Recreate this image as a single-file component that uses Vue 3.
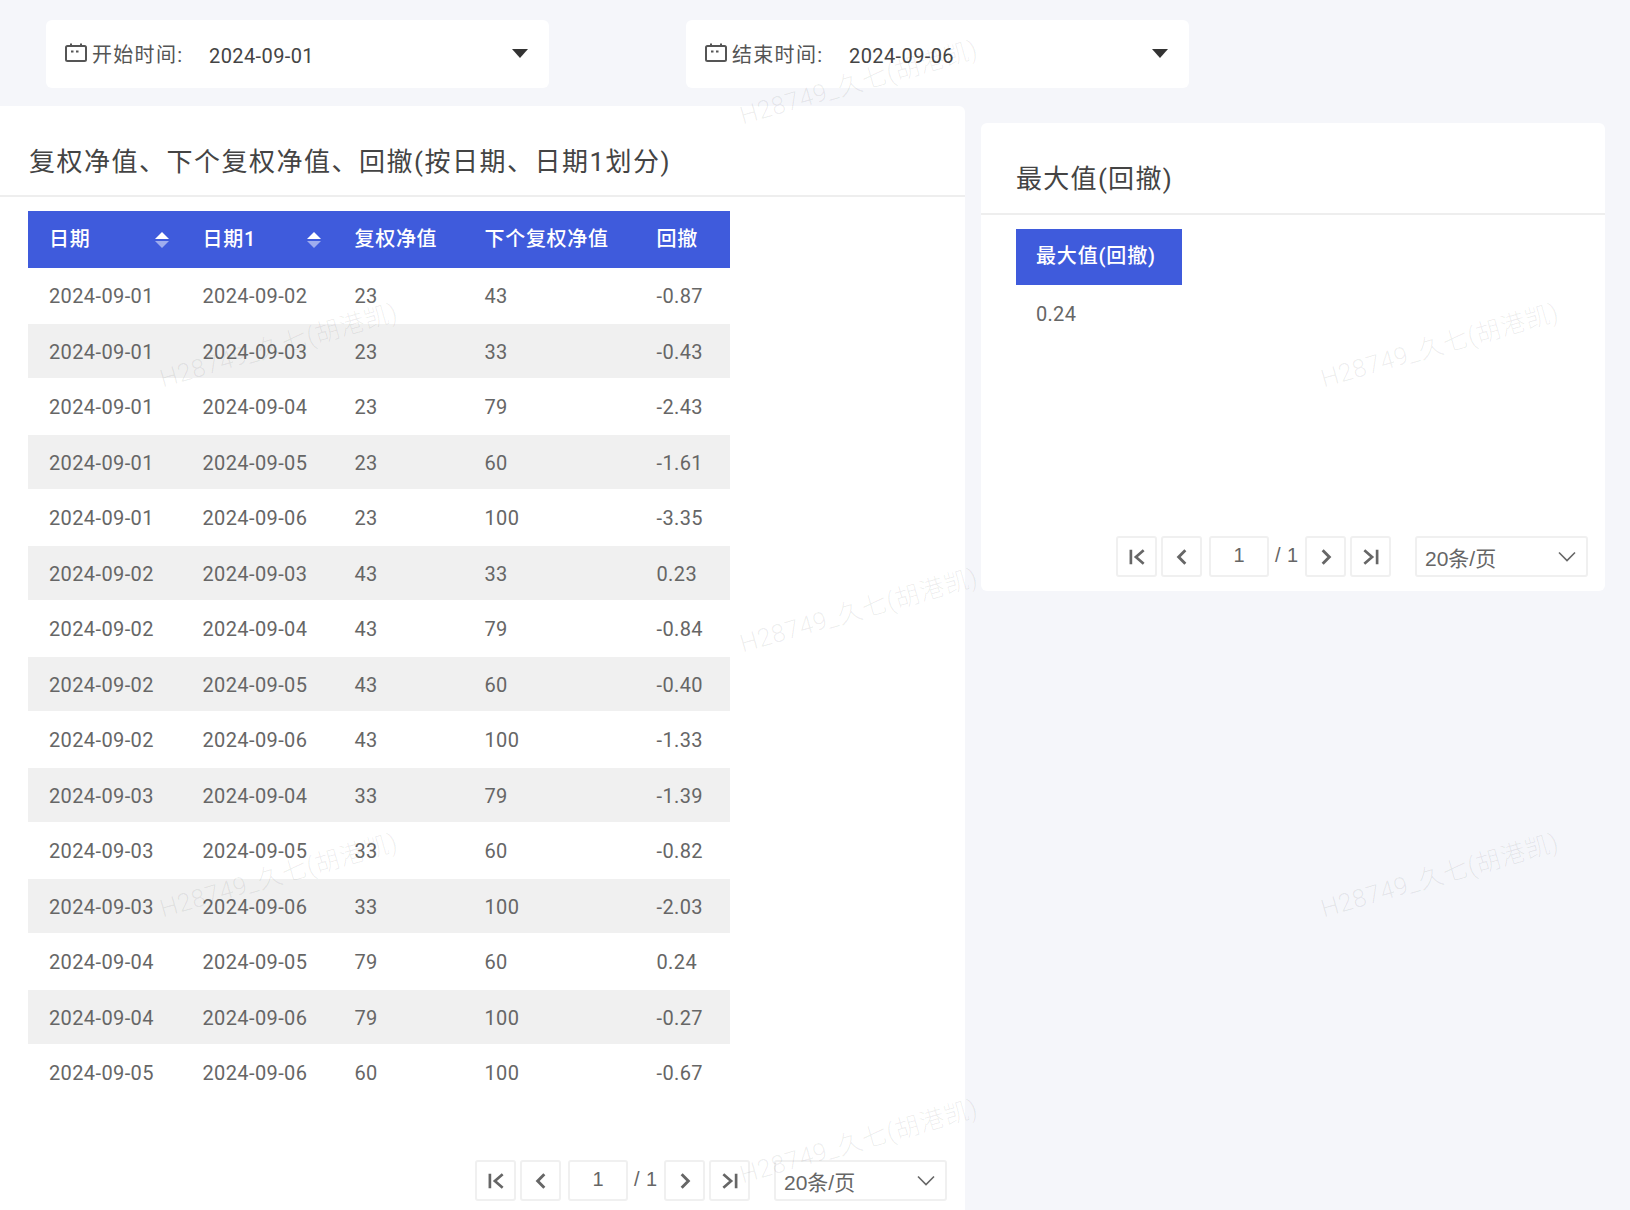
<script setup>
const cols = ['日期', '日期1', '复权净值', '下个复权净值', '回撤']
const rows = [
  ['2024-09-01', '2024-09-02', '23', '43', '-0.87'],
  ['2024-09-01', '2024-09-03', '23', '33', '-0.43'],
  ['2024-09-01', '2024-09-04', '23', '79', '-2.43'],
  ['2024-09-01', '2024-09-05', '23', '60', '-1.61'],
  ['2024-09-01', '2024-09-06', '23', '100', '-3.35'],
  ['2024-09-02', '2024-09-03', '43', '33', '0.23'],
  ['2024-09-02', '2024-09-04', '43', '79', '-0.84'],
  ['2024-09-02', '2024-09-05', '43', '60', '-0.40'],
  ['2024-09-02', '2024-09-06', '43', '100', '-1.33'],
  ['2024-09-03', '2024-09-04', '33', '79', '-1.39'],
  ['2024-09-03', '2024-09-05', '33', '60', '-0.82'],
  ['2024-09-03', '2024-09-06', '33', '100', '-2.03'],
  ['2024-09-04', '2024-09-05', '79', '60', '0.24'],
  ['2024-09-04', '2024-09-06', '79', '100', '-0.27'],
  ['2024-09-05', '2024-09-06', '60', '100', '-0.67']
]
const filters = [
  { label: '开始时间:', value: '2024-09-01' },
  { label: '结束时间:', value: '2024-09-06' }
]
const marks = [
  [278, 343], [278, 873], [858, 80], [858, 608], [858, 1139], [1439, 343], [1439, 873]
]
</script>

<template>
  <div class="page">
    <div class="filters">
      <div v-for="f in filters" :key="f.label" class="filter">
        <svg class="cal" width="22" height="20" viewBox="0 0 22 20" fill="none" stroke="#555" stroke-width="2">
          <rect x="1" y="3" width="20" height="15" rx="1.5" />
          <path d="M6 0.5V4M16 0.5V4" />
          <path d="M6 8.5h2.5M11 8.5h2.5" />
        </svg>
        <span class="flabel">{{ f.label }}</span>
        <span class="fvalue">{{ f.value }}</span>
        <span class="caret"></span>
      </div>
    </div>

    <div class="main">
      <section class="panel left">
        <h2 class="title">复权净值、下个复权净值、回撤(按日期、日期1划分)</h2>
        <div class="table">
          <div class="row head">
            <div v-for="(c, i) in cols" :key="c" class="cell">
              <span>{{ c }}</span>
              <span v-if="i < 2" class="sort"><i class="up"></i><i class="down"></i></span>
            </div>
          </div>
          <div v-for="(r, i) in rows" :key="i" class="row body" :class="{ odd: i % 2 === 1 }">
            <div v-for="(v, j) in r" :key="j" class="cell">{{ v }}</div>
          </div>
        </div>
        <div class="pager">
          <button class="pg">
            <svg width="20" height="20" viewBox="0 0 18 18" fill="none" stroke="#666" stroke-width="2.4"><path d="M3.5 2.5v13M15 3l-7 6 7 6" /></svg>
          </button>
          <button class="pg">
            <svg width="20" height="20" viewBox="0 0 18 18" fill="none" stroke="#666" stroke-width="2.6"><path d="M12 3 6 9l6 6" /></svg>
          </button>
          <div class="pinput">1</div>
          <span class="total">/ 1</span>
          <button class="pg">
            <svg width="20" height="20" viewBox="0 0 18 18" fill="none" stroke="#666" stroke-width="2.6"><path d="m6 3 6 6-6 6" /></svg>
          </button>
          <button class="pg">
            <svg width="20" height="20" viewBox="0 0 18 18" fill="none" stroke="#666" stroke-width="2.4"><path d="M14.5 2.5v13M3 3l7 6-7 6" /></svg>
          </button>
          <div class="psel">
            <span>20条/页</span>
            <svg width="18" height="12" viewBox="0 0 18 12" fill="none" stroke="#666" stroke-width="1.6"><path d="m1 1.5 8 8 8-8" /></svg>
          </div>
        </div>
      </section>

      <section class="panel right">
        <h2 class="title">最大值(回撤)</h2>
        <div class="mini">
          <div class="mini-head">最大值(回撤)</div>
          <div class="mini-val">0.24</div>
        </div>
        <div class="pager">
          <button class="pg">
            <svg width="20" height="20" viewBox="0 0 18 18" fill="none" stroke="#666" stroke-width="2.4"><path d="M3.5 2.5v13M15 3l-7 6 7 6" /></svg>
          </button>
          <button class="pg">
            <svg width="20" height="20" viewBox="0 0 18 18" fill="none" stroke="#666" stroke-width="2.6"><path d="M12 3 6 9l6 6" /></svg>
          </button>
          <div class="pinput">1</div>
          <span class="total">/ 1</span>
          <button class="pg">
            <svg width="20" height="20" viewBox="0 0 18 18" fill="none" stroke="#666" stroke-width="2.6"><path d="m6 3 6 6-6 6" /></svg>
          </button>
          <button class="pg">
            <svg width="20" height="20" viewBox="0 0 18 18" fill="none" stroke="#666" stroke-width="2.4"><path d="M14.5 2.5v13M3 3l7 6-7 6" /></svg>
          </button>
          <div class="psel">
            <span>20条/页</span>
            <svg width="18" height="12" viewBox="0 0 18 12" fill="none" stroke="#666" stroke-width="1.6"><path d="m1 1.5 8 8 8-8" /></svg>
          </div>
        </div>
      </section>
    </div>

    <div
      v-for="(m, i) in marks"
      :key="i"
      class="mark"
      :style="{ left: m[0] + 'px', top: m[1] + 'px' }"
    >H28749_久七(胡港凯)</div>
  </div>
</template>

<style>
html, body { margin: 0; background: #f5f6fa; }
</style>

<style scoped>
.page {
  position: relative;
  width: 1630px;
  height: 1210px;
  overflow: hidden;
  background: #f5f6fa;
  font-family: Roboto, "Noto Sans CJK SC", sans-serif;
  color: #666;
}
.filters {
  display: flex;
  gap: 137px;
  padding: 20px 0 18px 46px;
}
.filter {
  width: 503px;
  height: 68px;
  box-sizing: border-box;
  background: #fff;
  border-radius: 6px;
  display: flex;
  align-items: center;
  padding: 0 21px 0 19px;
  position: relative;
}
.cal { margin-right: 5px; margin-top: -3px; }
.flabel { font-size: 20px; color: #555; width: 117px; letter-spacing: 1.3px; margin-top: -1px; white-space: nowrap; }
.fvalue { font-size: 20px; color: #444; flex: 1; margin-top: 4px; letter-spacing: 0.4px; }
.caret {
  width: 0;
  height: 0;
  border-left: 8px solid transparent;
  border-right: 8px solid transparent;
  border-top: 9px solid #333;
  margin-top: -2px;
}
.main { display: flex; align-items: flex-start; }
.panel { background: #fff; display: flex; flex-direction: column; }
.left { width: 965px; height: 1104px; border-top-right-radius: 6px; }
.right {
  width: 624px;
  height: 468px;
  margin-left: 16px;
  margin-top: 17px;
  border-radius: 6px;
}
.title {
  margin: 0;
  height: 91px;
  line-height: 112px;
  box-sizing: border-box;
  font-size: 26px;
  font-weight: 400;
  letter-spacing: 1.5px;
  color: #444;
  padding-left: 29px;
  border-bottom: 2px solid #eee;
  white-space: nowrap;
}
.right .title { padding-left: 35px; height: 92px; line-height: 112px; letter-spacing: 1.3px; }
.table { margin: 14px 0 0 28px; width: 702px; }
.row { display: grid; grid-template-columns: 153.5px 152px 130px 172px 94.5px; }
.head { height: 57px; background: #3f5bdc; color: #fff; font-size: 20px; font-weight: 500; letter-spacing: 0.7px; }
.head .cell { padding-bottom: 4px; box-sizing: border-box; }
.body { height: 55.5px; font-size: 20px; color: #666; box-sizing: border-box; border-bottom: 1.5px solid #fff; letter-spacing: 0.38px; }
.body .cell { padding-top: 2px; box-sizing: border-box; }
.odd { background: #f0f0f0; }
.cell { display: flex; align-items: center; padding-left: 21px; position: relative; white-space: nowrap; }
.sort { position: absolute; right: 13px; top: 21px; display: flex; flex-direction: column; gap: 2px; }
.sort i { display: block; width: 0; height: 0; border-left: 7px solid transparent; border-right: 7px solid transparent; }
.sort .up { border-bottom: 7px solid #fff; }
.sort .down { border-top: 7px solid rgba(255, 255, 255, 0.5); }
.pager {
  display: flex;
  align-items: center;
  justify-content: flex-end;
  margin-top: auto;
  height: 41px;
  padding: 0 18px 9px 0;
  color: #666;
  font-family: "Liberation Sans", "Noto Sans CJK SC", sans-serif;
}
.right .pager { padding: 0 17px 14px 0; }
.pg, .pinput, .psel {
  box-sizing: border-box;
  height: 41px;
  border: 2px solid #f0f0f0;
  border-radius: 3px;
  background: #fff;
}
.pg { width: 41px; padding: 0; display: flex; align-items: center; justify-content: center; margin-right: 4px; }
.pinput { width: 60px; margin-left: 3px; text-align: center; line-height: 34px; font-size: 20px; }
.total { width: 36px; box-sizing: border-box; padding-left: 6px; font-size: 20px; margin-top: -2px; letter-spacing: 0.4px; }
.psel {
  width: 173px;
  margin-left: 20px;
  display: flex;
  align-items: center;
  justify-content: space-between;
  padding: 0 10px 0 8px;
  font-size: 21px;
}
.mini { margin: 14px 0 0 35px; flex: 1; }
.mini-head {
  width: 166px;
  height: 56px;
  box-sizing: border-box;
  background: #3f5bdc;
  color: #fff;
  font-size: 20px;
  font-weight: 500;
  letter-spacing: 0.85px;
  line-height: 54px;
  padding-left: 20px;
}
.mini-val { padding-left: 20px; font-size: 20px; line-height: 59px; color: #666; letter-spacing: 0.3px; }
.mark {
  position: absolute;
  transform: translate(-50%, -50%) rotate(-16deg);
  font-size: 25px;
  font-weight: 300;
  color: rgba(0, 0, 0, 0.07);
  white-space: nowrap;
  pointer-events: none;
  letter-spacing: 0.5px;
}
</style>
